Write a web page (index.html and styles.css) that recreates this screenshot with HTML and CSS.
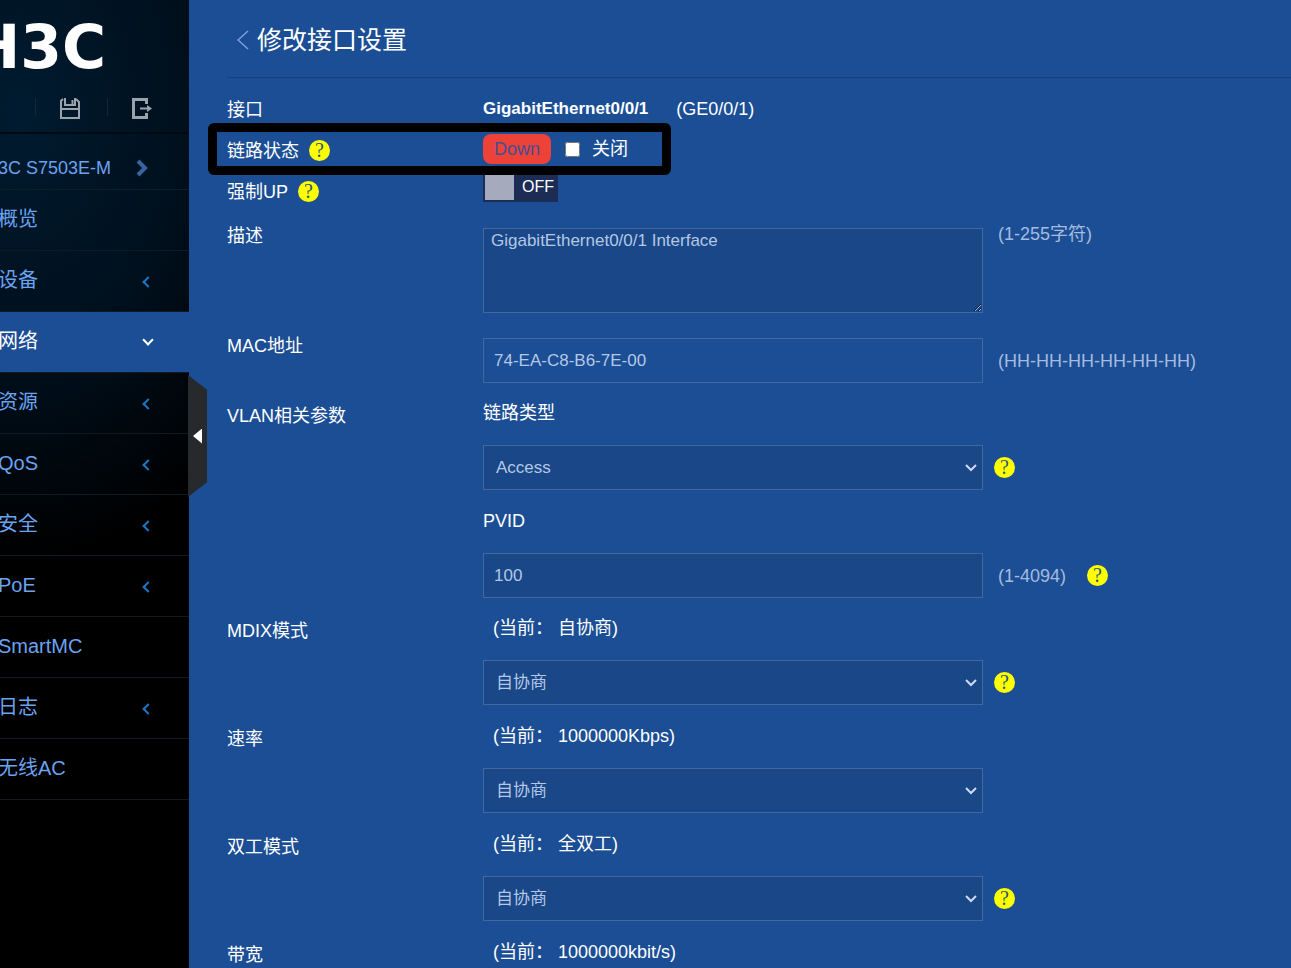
FILE: index.html
```
<!DOCTYPE html>
<html lang="zh">
<head>
    <meta charset="UTF-8">
    <meta name="viewport" content="width=device-width, initial-scale=1.0">
    <title>修改接口设置</title>
    <link rel="stylesheet" href="styles.css">
</head>
<body>

    <!-- 左侧导航 -->
    <aside class="sidebar">
        <div class="logo"><span>H3C</span></div>
        <div class="tools">
            <button type="button" aria-label="保存">
                <svg width="20" height="21" viewBox="0 0 20 21" fill="none" stroke="#9aa3ab" stroke-width="2">
                    <path d="M1 10V3L3 1M16 1L19 4V10"/>
                    <path d="M5 0V7H15V0"/>
                    <path d="M1 20V11H19V20Z"/>
                    <path d="M12.500 2V6"/>
                </svg>
            </button>
            <button type="button" aria-label="退出">
                <svg width="20" height="21" viewBox="0 0 20 21" fill="none" stroke="#9aa3ab" stroke-width="3">
                    <path d="M14.500 6V1.500H1.500V19.500H14.500V15"/>
                    <path d="M8 10.500H17" stroke-width="2"/>
                    <path d="M15 7L20 10.500L15 14Z" fill="#9aa3ab" stroke="none"/>
                </svg>
            </button>
        </div>
        <a href="#" class="device">
            <span>H3C S7503E-M</span>
            <svg width="12" height="18" viewBox="0 0 12 18" fill="none" stroke="#39639f" stroke-width="4"><path d="M2 2L9 9L2 16"/></svg>
        </a>
        <nav class="nav">
            <a href="#"><span>概览</span></a>
            <a href="#" class="sub"><span>设备</span></a>
            <a href="#" class="sub open"><span>网络</span></a>
            <a href="#" class="sub"><span>资源</span></a>
            <a href="#" class="sub"><span>QoS</span></a>
            <a href="#" class="sub"><span>安全</span></a>
            <a href="#" class="sub"><span>PoE</span></a>
            <a href="#"><span>SmartMC</span></a>
            <a href="#" class="sub"><span>日志</span></a>
            <a href="#"><span>无线AC</span></a>
        </nav>
        <button type="button" class="collapse" aria-label="收起"></button>
    </aside>

    <!-- 接口设置 -->
    <main class="main">
        <header class="title">
            <a href="#" aria-label="返回">
                <svg width="12" height="20" viewBox="0 0 12 20" fill="none" stroke="#7d9fe0" stroke-width="1.500"><path d="M11 1L1 10L11 19"/></svg>
            </a>
            <h1>修改接口设置</h1>
        </header>

        <form class="form">
            <div class="row compact">
                <div class="label">接口</div>
                <div class="line name"><b>GigabitEthernet0/0/1</b><span>(GE0/0/1)</span></div>
            </div>

            <div class="row compact marked">
                <div class="label">链路状态 <button type="button" class="help">?</button></div>
                <div class="line state">
                    <span class="down">Down</span>
                    <input type="checkbox" id="shutdown">
                    <label for="shutdown">关闭</label>
                </div>
            </div>

            <div class="row">
                <div class="label">强制UP <button type="button" class="help">?</button></div>
                <div><button type="button" class="switch">OFF</button></div>
            </div>

            <div class="row">
                <label class="label" for="desc">描述</label>
                <div class="control first top">
                    <textarea id="desc">GigabitEthernet0/0/1 Interface</textarea>
                    <span class="hint">(1-255字符)</span>
                </div>
            </div>

            <div class="row">
                <label class="label" for="mac">MAC地址</label>
                <div class="control first">
                    <input type="text" id="mac" class="plain" value="74-EA-C8-B6-7E-00">
                    <span class="hint">(HH-HH-HH-HH-HH-HH)</span>
                </div>
            </div>

            <div class="row">
                <div class="label">VLAN相关参数</div>
                <div class="stack">
                    <div>
                        <label class="caption" for="link">链路类型</label>
                        <div class="control">
                            <select id="link"><option>Access</option></select>
                            <button type="button" class="help">?</button>
                        </div>
                    </div>
                    <div>
                        <label class="caption" for="pvid">PVID</label>
                        <div class="control">
                            <input type="text" id="pvid" value="100">
                            <span class="hint">(1-4094)</span>
                            <button type="button" class="help">?</button>
                        </div>
                    </div>
                </div>
            </div>

            <div class="row mode">
                <label class="label" for="mdix">MDIX模式</label>
                <div>
                    <div class="caption current"><span>(当前：</span><span>自协商)</span></div>
                    <div class="control">
                        <select id="mdix"><option>自协商</option></select>
                        <button type="button" class="help">?</button>
                    </div>
                </div>
            </div>

            <div class="row mode">
                <label class="label" for="speed">速率</label>
                <div>
                    <div class="caption current"><span>(当前：</span><span>1000000Kbps)</span></div>
                    <div class="control">
                        <select id="speed"><option>自协商</option></select>
                    </div>
                </div>
            </div>

            <div class="row mode">
                <label class="label" for="duplex">双工模式</label>
                <div>
                    <div class="caption current"><span>(当前：</span><span>全双工)</span></div>
                    <div class="control">
                        <select id="duplex"><option>自协商</option></select>
                        <button type="button" class="help">?</button>
                    </div>
                </div>
            </div>

            <div class="row mode">
                <div class="label">带宽</div>
                <div class="caption current"><span>(当前：</span><span>1000000kbit/s)</span></div>
            </div>
        </form>
    </main>

</body>
</html>
```
FILE: styles.css
```
*, *::before, *::after { box-sizing: border-box; }
body { margin: 0; height: 100vh; display: flex; overflow: hidden; background: #1b4e95; color: #fff; font: 18px/24px "Liberation Sans", "Noto Sans CJK SC", sans-serif; }
a { color: inherit; text-decoration: none; }
button { border: 0; padding: 0; cursor: pointer; font: inherit; }

/* 左侧导航 */
.sidebar { position: relative; flex: none; width: 189px; color: #6aa3f0; background: radial-gradient(ellipse 300px 450px at 20px 110px, #001b30, #000e1a 60%, #000); }
.logo { height: 86px; padding-top: 12px; display: flex; }
.logo span { margin-left: -30px; color: #fff; font: bold 60px/70px "DejaVu Sans", sans-serif; }
.tools { height: 48px; padding: 12px 0 0 35px; display: flex; border-bottom: 2px solid #000a12; }
.tools button { width: 72px; height: 18px; padding-left: 24px; background: none; border-left: 1px solid #0c2a3c; }
.tools svg { display: block; }
.device { height: 56px; display: flex; align-items: center; justify-content: flex-end; gap: 25px; padding: 13px 41px 0 0; border-bottom: 1px solid #0a1e2c; white-space: nowrap; }
.device svg { flex: none; }
.nav a { display: flex; align-items: center; justify-content: space-between; height: 61px; padding-right: 37px; border-bottom: 1px solid #101a20; font-size: 20px; }
.nav span { margin: -2px 0 0 -2px; }
.nav .sub::after { content: ""; width: 8px; height: 8px; margin-top: 2px; border: solid #1d76c4; border-width: 0 0 2px 2px; transform: rotate(45deg); }
.nav .open { background: #1b4e95; color: #fff; }
.nav .open::after { margin-top: -4px; border-color: #fff; transform: rotate(-45deg); }
.collapse { position: absolute; left: 188px; top: 375px; width: 19px; height: 122px; background: #262a2c; clip-path: polygon(0 0, 100% 12%, 100% 88%, 0 100%); }
.collapse::after { content: ""; display: block; margin-left: 5px; width: 9px; height: 15px; background: #fff; clip-path: polygon(100% 0, 100% 100%, 0 50%); }

/* 标题 */
.main { flex: 1; padding-left: 38px; }
.title { height: 78px; display: flex; align-items: center; gap: 8px; padding: 2px 0 0 10px; border-bottom: 1px solid #163f7c; }
.title a, .title svg { display: block; }
.title h1 { margin: 0; font-size: 25px; font-weight: normal; line-height: 36px; }

/* 表单 */
.form { padding-top: 16px; }
.row { display: grid; grid-template-columns: 256px 1fr; padding-bottom: 17px; }
.compact { padding-bottom: 14px; }
.mode { padding-bottom: 18px; }
.label { padding-top: 4px; height: 27px; display: flex; align-items: center; gap: 10px; align-self: start; }
.line { display: flex; height: 27px; align-items: center; }
.name { gap: 28px; padding-top: 2px; }
.name b { font-size: 17px; }
.marked { position: relative; }
.marked::after { content: ""; position: absolute; z-index: 1; left: -19px; top: -12px; width: 463px; height: 52px; border: 9px solid #000; border-radius: 6px; pointer-events: none; }
.down { width: 68px; line-height: 30px; text-align: center; background: #ec4238; color: #444f96; border-radius: 8px; }
.state input { width: 15px; height: 15px; margin: 2px 12px 0 14px; }
.switch { display: flex; align-items: center; gap: 8px; width: 75px; height: 31px; margin-top: -5px; padding-left: 2px; background: #1c2c54; color: #fff; font-size: 16px; }
.switch::before { content: ""; width: 29px; height: 27px; background: #a5abbc; }
.help { width: 21px; height: 21px; border-radius: 50%; background: #ff0; color: #28567c; font: 20px/21px "Liberation Serif", serif; text-align: center; }
.control { display: flex; align-items: center; }
.control .help { margin-left: 11px; }
.first { margin-top: 8px; }
.top { align-items: flex-start; }
.hint { margin-left: 15px; color: #a5bbdf; }
.control .hint + .help { margin-left: 21px; }
.top .hint { margin-top: -6px; }
.stack { display: grid; gap: 18px; }
.caption { display: block; padding-top: 1px; margin-bottom: 20px; }
.current { display: flex; gap: 5px; padding-left: 10px; }
.control input, .control select, .control textarea { width: 500px; height: 45px; margin: 0; padding: 0 10px; border: 1px solid #41689f; border-radius: 0; background: #194787; color: #b4c7e6; font: inherit; font-size: 17px; }
.control select { padding: 0 12px; appearance: none; background: #194787 url("data:image/svg+xml,%3Csvg xmlns='http://www.w3.org/2000/svg' width='12' height='8' fill='none' stroke='%23cfdaf0' stroke-width='2'%3E%3Cpath d='M1 1L6 6L11 1'/%3E%3C/svg%3E") no-repeat right 5px center; }
.control textarea { height: 85px; padding: 0 7px; resize: both; }
.control .plain { background: none; }
```
